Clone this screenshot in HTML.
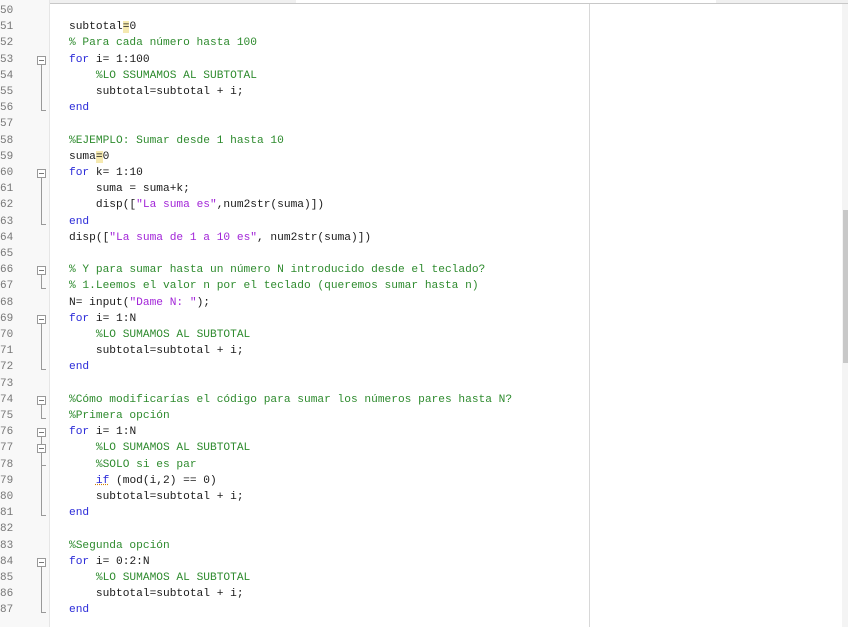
<!DOCTYPE html>
<html><head><meta charset="utf-8"><style>
body{margin:0;width:848px;height:627px;background:#fff;position:relative;overflow:hidden;font-family:"Liberation Mono",monospace;}
.g{position:absolute;left:0;top:0;width:49px;height:627px;background:#f8f8f8;border-right:1px solid #e6e6e6;}
.ln{position:absolute;left:0;font-size:11px;color:#777;line-height:16px;}
.c{position:absolute;left:69px;font-size:11.2px;line-height:16px;color:#1a1a1a;white-space:pre;}
.k{color:#2a2ad8}.m{color:#2e8b2e}.s{color:#a225d8}
.box{position:absolute;left:37px;width:7px;height:7px;border:1px solid #999;background:#fff}
.box:after{content:"";position:absolute;left:1px;top:3px;width:5px;height:1px;background:#777}
.v{position:absolute;left:41px;width:1px;background:#999}
.h{position:absolute;left:41px;width:5px;height:1px;background:#999}
</style></head><body>
<div style="position:absolute;left:0;top:0;width:848px;height:3px;border-bottom:1px solid #c8c8c8;background:#f0f0f0"></div>
<div style="position:absolute;left:296px;top:0;width:420px;height:3px;background:#fff"></div>
<div class="g"></div>
<div style="position:absolute;left:589px;top:4px;width:1px;height:623px;background:#d8d8d8"></div>
<div style="position:absolute;left:842px;top:4px;width:6px;height:623px;background:#f4f4f4"></div>
<div style="position:absolute;left:843px;top:210px;width:5px;height:153px;background:#c8c8c8"></div>
<div id="w"></div>
<script>
const L={50:'',51:'subtotal<span style="background:#f5e9b0">=</span>0',52:'<span class=m>% Para cada número hasta 100</span>',53:'<span class=k>for</span> i= 1:100',54:'    <span class=m>%LO SSUMAMOS AL SUBTOTAL</span>',55:'    subtotal=subtotal + i;',56:'<span class=k>end</span>',57:'',
58:'<span class=m>%EJEMPLO: Sumar desde 1 hasta 10</span>',59:'suma<span style="background:#f5e9b0">=</span>0',60:'<span class=k>for</span> k= 1:10',61:'    suma = suma+k;',62:'    disp([<span class=s>"La suma es"</span>,num2str(suma)])',63:'<span class=k>end</span>',64:'disp([<span class=s>"La suma de 1 a 10 es"</span>, num2str(suma)])',65:'',
66:'<span class=m>% Y para sumar hasta un número N introducido desde el teclado?</span>',67:'<span class=m>% 1.Leemos el valor n por el teclado (queremos sumar hasta n)</span>',68:'N= input(<span class=s>"Dame N: "</span>);',69:'<span class=k>for</span> i= 1:N',70:'    <span class=m>%LO SUMAMOS AL SUBTOTAL</span>',71:'    subtotal=subtotal + i;',72:'<span class=k>end</span>',73:'',
74:'<span class=m>%Cómo modificarías el código para sumar los números pares hasta N?</span>',75:'<span class=m>%Primera opción</span>',76:'<span class=k>for</span> i= 1:N',77:'    <span class=m>%LO SUMAMOS AL SUBTOTAL</span>',78:'    <span class=m>%SOLO si es par</span>',79:'    <span class=k style="text-decoration:underline dotted #d08000">if</span> (mod(i,2) == 0)',80:'    subtotal=subtotal + i;',81:'<span class=k>end</span>',82:'',
83:'<span class=m>%Segunda opción</span>',84:'<span class=k>for</span> i= 0:2:N',85:'    <span class=m>%LO SUMAMOS AL SUBTOTAL</span>',86:'    subtotal=subtotal + i;',87:'<span class=k>end</span>'};
let h='';const T=n=>3+(n-50)*16.2;
for(let n=50;n<=87;n++){h+=`<div class=ln style="top:${T(n)}px">${n}</div><div class=c style="top:${T(n)}px">${L[n]}</div>`;}
const F=[[53,56],[60,63],[66,67],[69,72],[74,75],[76,81],[84,87]];
for(const [a,b] of F){const y=T(a)+4;const ye=T(b)+10;h+=`<div class=v style="top:${y+9}px;height:${ye-y-9}px"></div><div class=h style="top:${ye}px"></div><div class=box style="top:${y}px"></div>`;}
h+=`<div class=box style="top:${T(77)+4}px"></div><div class=h style="top:${T(78)+8}px"></div>`;
document.getElementById('w').innerHTML=h;
</script>
</body></html>
